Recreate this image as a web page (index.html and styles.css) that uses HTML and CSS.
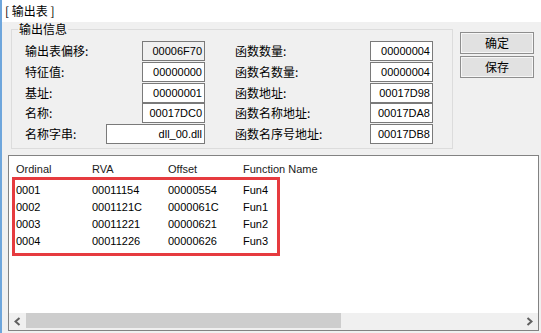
FILE: index.html
```html
<!DOCTYPE html>
<html lang="zh-CN">
<head>
    <meta charset="UTF-8">
    <title>输出表</title>
    <link rel="stylesheet" href="styles.css">
</head>
<body>
    <div class="window">
        <div class="title">[ 输出表 ]</div>

        <div class="top">
            <fieldset class="group">
                <legend>输出信息</legend>
                <div class="fields">
                    <div class="col col-left">
                        <div class="row"><span class="label">输出表偏移:</span><span class="edit readonly">00006F70</span></div>
                        <div class="row"><span class="label">特征值:</span><span class="edit">00000000</span></div>
                        <div class="row"><span class="label">基址:</span><span class="edit">00000001</span></div>
                        <div class="row"><span class="label">名称:</span><span class="edit">00017DC0</span></div>
                        <div class="row"><span class="label">名称字串:</span><span class="edit wide">dll_00.dll</span></div>
                    </div>
                    <div class="col col-right">
                        <div class="row"><span class="label">函数数量:</span><span class="edit">00000004</span></div>
                        <div class="row"><span class="label">函数名数量:</span><span class="edit">00000004</span></div>
                        <div class="row"><span class="label">函数地址:</span><span class="edit">00017D98</span></div>
                        <div class="row"><span class="label">函数名称地址:</span><span class="edit">00017DA8</span></div>
                        <div class="row"><span class="label">函数名序号地址:</span><span class="edit">00017DB8</span></div>
                    </div>
                </div>
            </fieldset>

            <div class="buttons">
                <button class="btn">确定</button>
                <button class="btn">保存</button>
            </div>
        </div>

        <div class="list">
            <div class="list-body">
                <div class="list-head">
                    <span class="c1">Ordinal</span><span class="c2">RVA</span><span class="c3">Offset</span><span class="c4">Function Name</span>
                </div>
                <div class="list-row">
                    <span class="c1">0001</span><span class="c2">00011154</span><span class="c3">00000554</span><span class="c4">Fun4</span>
                </div>
                <div class="list-row">
                    <span class="c1">0002</span><span class="c2">0001121C</span><span class="c3">0000061C</span><span class="c4">Fun1</span>
                </div>
                <div class="list-row">
                    <span class="c1">0003</span><span class="c2">00011221</span><span class="c3">00000621</span><span class="c4">Fun2</span>
                </div>
                <div class="list-row">
                    <span class="c1">0004</span><span class="c2">00011226</span><span class="c3">00000626</span><span class="c4">Fun3</span>
                </div>
            </div>

            <div class="hscroll">
                <span class="arrow">
                    <svg width="7" height="9" viewBox="0 0 7 9"><polyline points="5.5,1 1.5,4.5 5.5,8" fill="none" stroke="#606060" stroke-width="2"/></svg>
                </span>
                <span class="thumb"></span>
                <span class="track"></span>
                <span class="arrow">
                    <svg width="7" height="9" viewBox="0 0 7 9"><polyline points="1.5,1 5.5,4.5 1.5,8" fill="none" stroke="#606060" stroke-width="2"/></svg>
                </span>
            </div>

            <!-- red highlight drawn over the rows -->
            <div class="mark"></div>
        </div>
    </div>
</body>
</html>
```

FILE: styles.css
```css
body {
    margin: 0;
    background: #f0f0f0;
    font-family: "Noto Sans CJK SC", "Liberation Sans", sans-serif;
    font-size: 12px;
    color: #000;
}

.window {
    width: 541px;
    height: 333px;
    box-sizing: border-box;
    border-left: 2px solid #6ea6dc;
    overflow: hidden;
}

.title {
    height: 22px;
    line-height: 22px;
    padding-left: 3px;
    background: #fff;
}

.top {
    display: flex;
    align-items: flex-start;
}

.group {
    margin: 0 0 0 9px;
    width: 442px;
    box-sizing: border-box;
    padding: 5px 18px 4px 6px;
    border: 1px solid #dcdcdc;
    min-width: 0;
}

.group legend {
    padding: 0 1px;
    line-height: 14px;
}

.fields {
    display: flex;
    gap: 30px;
    margin-left: 7px;
}

.col {
    display: flex;
    flex-direction: column;
    gap: 0.75px;
}

.col-left { width: 180px; }
.col-right { width: 198px; }

.row {
    display: flex;
    justify-content: space-between;
    align-items: center;
    height: 20px;
}

.label {
    line-height: 16px;
}

.edit {
    width: 63px;
    height: 20px;
    box-sizing: border-box;
    border: 1px solid #7a7a7a;
    background: #fff;
    font-family: "Liberation Sans", sans-serif;
    font-size: 11px;
    display: flex;
    align-items: center;
    justify-content: flex-end;
    padding-right: 2px;
}

.edit.readonly { background: #f0f0f0; }
.edit.wide { width: 99px; }

.buttons {
    display: flex;
    flex-direction: column;
    gap: 2px;
    margin: 10px 0 0 7px;
}

.btn {
    width: 74px;
    height: 22px;
    margin: 0;
    padding: 0;
    border: 1px solid #8e8e8e;
    box-shadow: inset 0 0 0 1px #f6f6f6;
    background: #e1e1e1;
    font-family: "Noto Sans CJK SC", sans-serif;
    font-size: 12px;
    line-height: 18px;
    color: #000;
}

.list {
    position: relative;
    margin: 6px 0 0 6px;
    width: 531px;
    height: 176px;
    box-sizing: border-box;
    border: 1px solid #828282;
    background: #fff;
    display: flex;
    flex-direction: column;
    font-family: "Liberation Sans", sans-serif;
    font-size: 11px;
}

.list-body {
    flex: 1;
}

.list-head {
    display: flex;
    height: 25px;
    align-items: center;
    color: #1a1a1a;
}

.list-row {
    display: flex;
    height: 17px;
    align-items: center;
}

.list-head span,
.list-row span {
    padding-left: 7px;
    box-sizing: border-box;
}

.c1 { width: 76px; }
.c2 { width: 76px; }
.c3 { width: 75px; }
.c4 { flex: 1; }

.hscroll {
    display: flex;
    height: 17px;
    background: #f0f0f0;
}

.hscroll .arrow {
    width: 17px;
    display: flex;
    align-items: center;
    justify-content: center;
}

.hscroll .thumb {
    width: 315px;
    margin: 0 0 2px;
    background: #cdcdcd;
}

.hscroll .track { flex: 1; }

.mark {
    position: absolute;
    left: 3px;
    top: 21px;
    width: 268px;
    height: 79px;
    box-sizing: border-box;
    border: 3px solid #e63b3f;
}
```
